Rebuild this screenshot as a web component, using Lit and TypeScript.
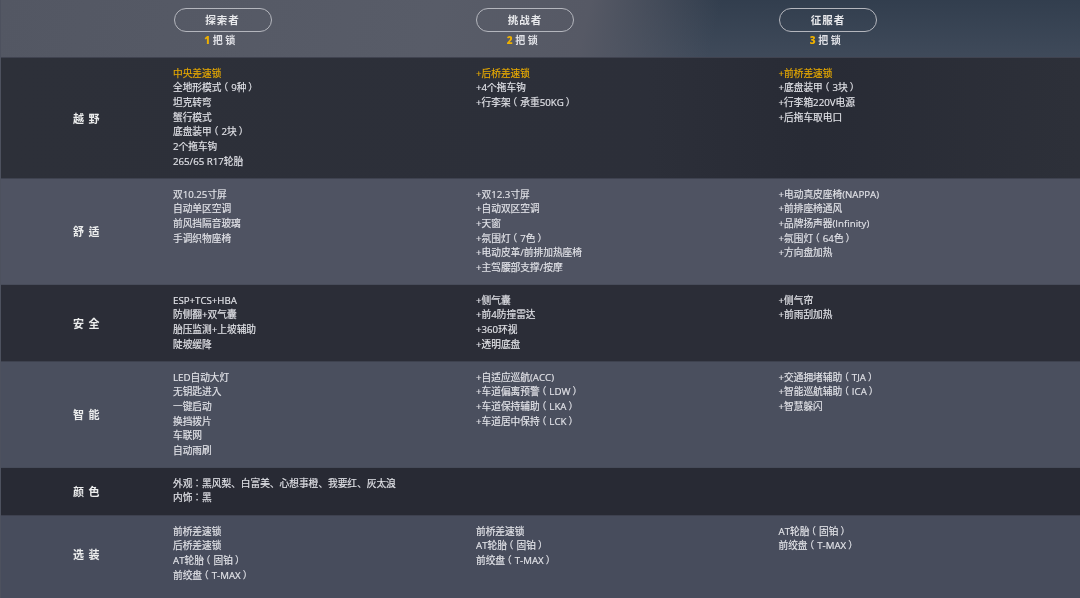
import { LitElement, html, css } from "lit";
import { customElement } from "lit/decorators.js";

interface Row { label: string; tone: string; cols: string[][]; accent?: boolean }

const heads = [
  { name: "探索者", n: "1" },
  { name: "挑战者", n: "2" },
  { name: "征服者", n: "3" },
];

const rows: Row[] = [
  { label: "越野", tone: "r1", accent: true, cols: [
    ["中央差速锁", "全地形模式（9种）", "坦克转弯", "蟹行模式", "底盘装甲（2块）", "2个拖车钩", "265/65 R17轮胎"],
    ["+后桥差速锁", "+4个拖车钩", "+行李架（承重50KG）"],
    ["+前桥差速锁", "+底盘装甲（3块）", "+行李箱220V电源", "+后拖车取电口"],
  ]},
  { label: "舒适", tone: "r2", cols: [
    ["双10.25寸屏", "自动单区空调", "前风挡隔音玻璃", "手调织物座椅"],
    ["+双12.3寸屏", "+自动双区空调", "+天窗", "+氛围灯（7色）", "+电动皮革/前排加热座椅", "+主驾腰部支撑/按摩"],
    ["+电动真皮座椅(NAPPA)", "+前排座椅通风", "+品牌扬声器(Infinity)", "+氛围灯（64色）", "+方向盘加热"],
  ]},
  { label: "安全", tone: "r3", cols: [
    ["ESP+TCS+HBA", "防侧翻+双气囊", "胎压监测+上坡辅助", "陡坡缓降"],
    ["+侧气囊", "+前4防撞雷达", "+360环视", "+透明底盘"],
    ["+侧气帘", "+前雨刮加热"],
  ]},
  { label: "智能", tone: "r4", cols: [
    ["LED自动大灯", "无钥匙进入", "一键启动", "换挡拨片", "车联网", "自动雨刷"],
    ["+自适应巡航(ACC)", "+车道偏离预警（LDW）", "+车道保持辅助（LKA）", "+车道居中保持（LCK）"],
    ["+交通拥堵辅助（TJA）", "+智能巡航辅助（ICA）", "+智慧躲闪"],
  ]},
  { label: "颜色", tone: "r5", cols: [
    ["外观：黑风梨、白富美、心想事橙、我要红、灰太浪", "内饰：黑"],
    [],
    [],
  ]},
  { label: "选装", tone: "r6", cols: [
    ["前桥差速锁", "后桥差速锁", "AT轮胎（固铂）", "前绞盘（T-MAX）"],
    ["前桥差速锁", "AT轮胎（固铂）", "前绞盘（T-MAX）"],
    ["AT轮胎（固铂）", "前绞盘（T-MAX）"],
  ]},
];

/* Fullwidth brackets sit nearer the middle of their em box in the reference's font. */
function lineParts(text: string) {
  return text.split(/([（）])/).map(p =>
    p === "（" ? html`<span class="po">（</span>` :
    p === "）" ? html`<span class="pc">）</span>` : p);
}

@customElement("app-root")
export class AppRoot extends LitElement {
  static styles = css`
    :host {
      display: block;
      width: 1080px;
      height: 598px;
      overflow: hidden;
      background: #474c5c;
      font-family: "Open Sans", "Noto Sans CJK JP", "Noto Sans CJK SC", sans-serif;
      color: #e2e3e8;
    }
    .page { filter: blur(0.3px); border-left: 1px solid #4d515e; }
    .grid {
      display: grid;
      grid-template-columns: 172px 303px 302.5px 1fr;
    }
    .head {
      height: 57px;
      background:
        linear-gradient(104deg, #535763 0%, #585c68 40%, #565965 54%, rgba(86,89,101,0) 66%),
        linear-gradient(180deg, #323e4e 0%, #3f4a5a 100%);
      border-bottom: 1px solid #404350;
    }
    .hcol { display: flex; flex-direction: column; align-items: flex-start; padding-top: 8px; }
    .hcol:nth-child(3) .pill, .hcol:nth-child(3) .locks { margin-left: 0; }
    .pill {
      box-sizing: border-box;
      width: 98px;
      height: 24px;
      margin-left: 0.5px;
      border: 1px solid #b4b6bd;
      border-radius: 12px;
      display: flex;
      align-items: center;
      justify-content: center;
      font-size: 10.5px;
      font-weight: 700;
      letter-spacing: 1px;
      line-height: 1;
      color: #e8e9ec;
    }
    .locks {
      box-sizing: border-box;
      width: 98px;
      padding-right: 5px;
      margin-left: 0.5px;
      text-align: center;
      font-size: 10px;
      font-weight: 700;
      line-height: 16px;
      letter-spacing: 0.5px;
      word-spacing: -1px;
      color: #e0e1e6;
    }
    .locks b { color: #eeb000; }
    .row { border-bottom: 1px solid rgba(70,74,88,0.75); }
    .r1 { height: 120px; background: linear-gradient(90deg, #2d3039, #2c2f39 60%, #282b35 75%, #2d3039); }
    .r2 { height: 105px; background: #4f5362; }
    .r3 { height: 76px; background: #2b2d37; }
    .r4 { height: 105px; background: #4a4f5e; }
    .r5 { height: 47px; background: #282a34; }
    .r6 { height: 76px; padding-bottom: 6px; background: #474c5c; border-bottom: 0; }
    .label {
      display: flex;
      align-items: center;
      justify-content: center;
      font-size: 11px;
      font-weight: 700;
      letter-spacing: 4.5px;
      color: #eceded;
      line-height: 1;
      padding-left: 3px;
    }
    .cell { padding-top: 8.5px; }
    .line {
      font-size: 9.7px;
      line-height: 14.67px;
      white-space: nowrap;
      color: #e2e3e8;
      -webkit-text-stroke: 0.15px currentColor;
    }
    .line.hot { color: #e8aa00; }
    .po { margin-left: -3px; margin-right: 3px; }
    .pc { margin-left: 2px; margin-right: -2px; }
  `;

  render() {
    return html`
      <div class="page">
        <div class="grid head">
          <div></div>
          ${heads.map(h => html`
            <div class="hcol">
              <div class="pill">${h.name}</div>
              <div class="locks"><b>${h.n}</b> 把 锁</div>
            </div>`)}
        </div>
        ${rows.map(r => html`
          <div class="grid row ${r.tone}">
            <div class="label">${r.label}</div>
            ${r.cols.map(c => html`
              <div class="cell">
                ${c.map((t, i) => html`<div class="line ${r.accent && i === 0 ? "hot" : ""}">${lineParts(t)}</div>`)}
              </div>`)}
          </div>`)}
      </div>
    `;
  }
}
